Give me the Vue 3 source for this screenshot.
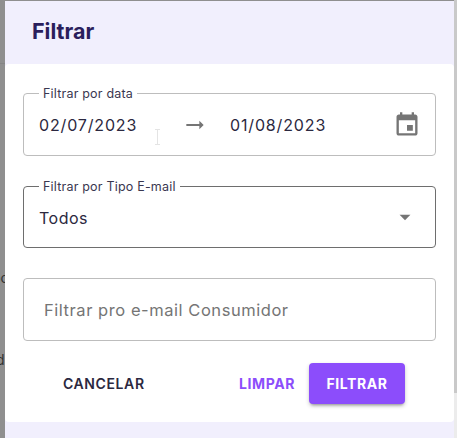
<script setup>
const title = 'Filtrar'
</script>

<template>
  <div class="page">
    <span class="bg-text one">po</span>
    <span class="bg-text two">d</span>
    <div class="dialog">
      <header class="head"><h2>{{ title }}</h2></header>
      <main class="body">
        <div class="field date">
          <span class="label">Filtrar por data</span>
          <span class="value">02/07/2023</span>
          <svg class="arrow" viewBox="0 0 24 24"><path d="M16.01 11H4v2h12.01v3L20 12l-3.99-4z" /></svg>
          <span class="value second">01/08/2023</span>
          <svg class="cal" viewBox="0 0 24 24"><path d="M17 12h-5v5h5v-5zM16 1v2H8V1H6v2H5c-1.11 0-1.99.9-1.99 2L3 19c0 1.1.89 2 2 2h14c1.1 0 2-.9 2-2V5c0-1.1-.9-2-2-2h-1V1h-2zm3 18H5V8h14v11z" /></svg>
          <svg class="ibeam" viewBox="0 0 7 16"><path d="M1 .5h5M3.500 .5v15M1 15.500h5" /></svg>
        </div>
        <div class="field select">
          <span class="label">Filtrar por Tipo E-mail</span>
          <span class="todos">Todos</span>
          <svg class="caret" viewBox="0 0 24 24"><path d="M7 10l5 5 5-5z" /></svg>
        </div>
        <div class="field email"><span>Filtrar pro e-mail Consumidor</span></div>
        <div class="actions">
          <button class="btn cancel">CANCELAR</button>
          <div class="right">
            <button class="btn clear">LIMPAR</button>
            <button class="btn apply">FILTRAR</button>
          </div>
        </div>
      </main>
    </div>
    <div class="scrollbar"><div class="thumb"></div></div>
  </div>
</template>

<style scoped>
.page {
  position: relative;
  width: 457px;
  height: 438px;
  overflow: hidden;
  background: linear-gradient(#8f8f8f 63px, #858585 63px, #858585 64px, #8f8f8f 64px);
  font-family: Inter, sans-serif;
}
.bg-text {
  position: absolute;
  left: 0;
  color: #333;
  font-size: 14px;
}
.one { top: 269px; left: -8px; }
.two { top: 351px; left: -4px; }
.dialog {
  position: absolute;
  left: 5px;
  top: 1px;
  width: 449px;
  height: 437px;
  background: #f1effd;
}
.head {
  height: 63px;
  display: flex;
  align-items: center;
  padding-left: 27px;
}
h2 {
  margin: 0 0 3px;
  font-size: 21.500px;
  font-weight: 700;
  color: #2a1e5c;
}
.body {
  height: 358px;
  background: #fff;
  border-radius: 4px;
  box-sizing: border-box;
  padding: 29px 18px 0;
  display: flex;
  flex-direction: column;
}
.field {
  position: relative;
  box-sizing: border-box;
  width: 413px;
  height: 63px;
  flex: none;
  padding: 0 15px;
  border: 1px solid #bdbdbd;
  border-radius: 4px;
  display: flex;
  align-items: center;
  color: #2b2840;
}
.label {
  position: absolute;
  left: 15px;
  top: -7px;
  padding: 0 4px;
  background: #fff;
  font-size: 12.500px;
  line-height: 13px;
  letter-spacing: .2px;
  color: #3a3750;
  white-space: nowrap;
}
.date { margin-bottom: 30px; }
.value {
  font-size: 16px;
  letter-spacing: .85px;
  width: 100px;
  white-space: nowrap;
}
.arrow { width: 26px; height: 26px; fill: #757575; margin-left: 43px; flex: none; }
.second { margin-left: 22px; }
.cal { width: 28px; height: 28px; fill: #757575; margin-left: auto; margin-right: -1px; flex: none; }
.ibeam {
  position: absolute;
  left: 130px;
  top: 35px;
  width: 7px;
  height: 16px;
  fill: none;
  stroke: #e4e4e4;
}
.select { border-color: #6e6e6e; height: 62px; margin-bottom: 30px; }
.todos { font-size: 16px; letter-spacing: .5px; margin-top: 1px; }
.caret { width: 26px; height: 26px; fill: #757575; margin-left: auto; margin-right: 2px; flex: none; }
.email { padding-left: 20px; color: #757575; font-size: 16.500px; letter-spacing: .55px; padding-top: 1px; }
.actions {
  display: flex;
  align-items: center;
  justify-content: space-between;
  margin-top: 22px;
}
.right { display: flex; align-items: center; gap: 14px; margin-right: 31px; }
.btn {
  border: 0;
  background: none;
  padding: 0;
  font-family: Inter, sans-serif;
  font-size: 14px;
  font-weight: 600;
  letter-spacing: .6px;
}
.cancel { color: #2b2840; margin-left: 40px; }
.clear { color: #8c4dfb; font-weight: 700; }
.apply {
  width: 96px;
  height: 41px;
  background: #8c4dfb;
  color: #fff;
  border-radius: 4px;
  font-weight: 700;
  box-shadow: 0 3px 3px -2px rgba(0,0,0,.3), 0 2px 4px rgba(0,0,0,.2);
}
.scrollbar {
  position: absolute;
  right: 0;
  top: 0;
  width: 3px;
  height: 438px;
  background: #ececec;
}
.thumb { height: 393px; background: #c9c9c9; }
</style>
